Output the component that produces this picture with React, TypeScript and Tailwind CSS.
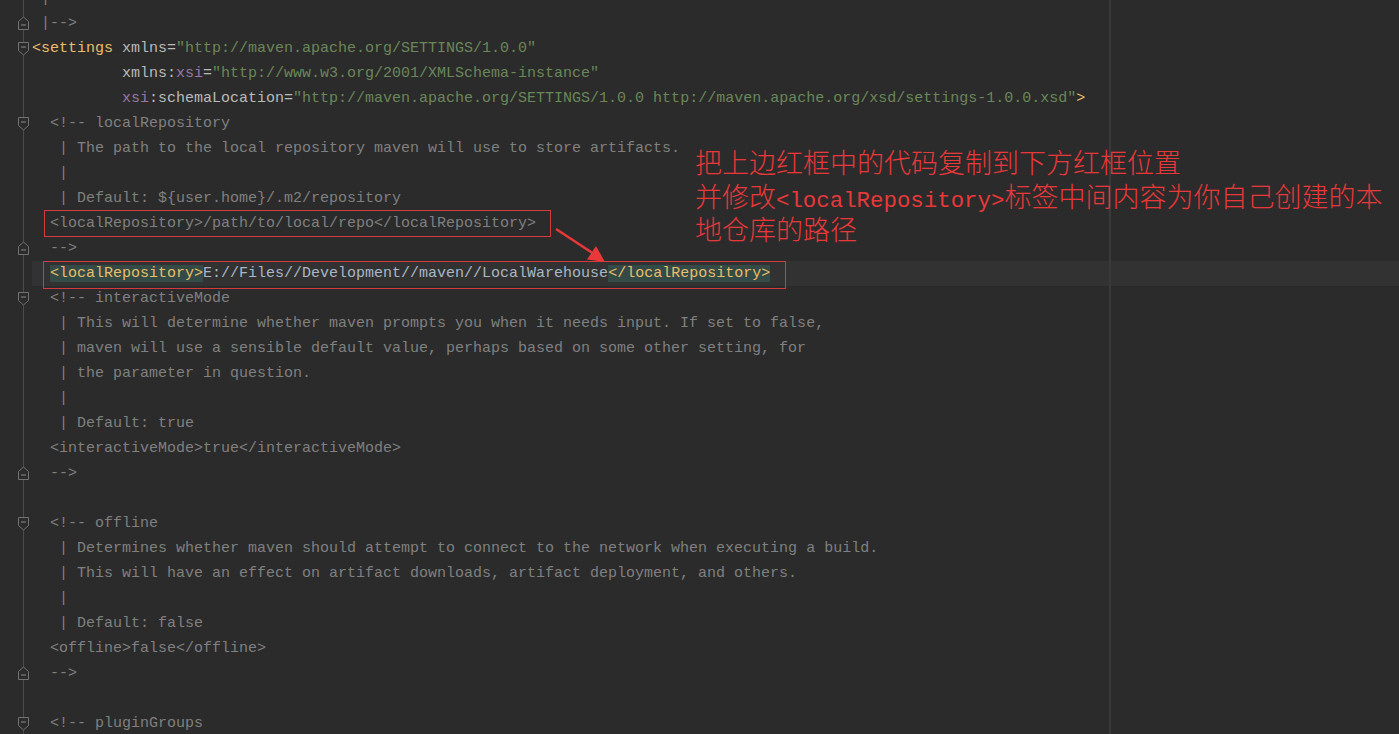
import React from "react";

type Seg = [string, string];

const C = "text-[#808080]";
const TAG = "text-[#e8bf6a]";
const ATTR = "text-[#bababa]";
const VAL = "text-[#6a8759]";
const NS = "text-[#9876aa]";
const TXT = "text-[#a9b7c6]";
const HL = "text-[#e8bf6a] bg-[#344a46]";

const c = (s: string): Seg[] => [[s, C]];

const lines: Seg[][] = [
  c(" |"),
  c(" |-->"),
  [
    ["<settings", TAG],
    [" xmlns=", ATTR],
    ['"http://maven.apache.org/SETTINGS/1.0.0"', VAL],
  ],
  [
    ["          xmlns:", ATTR],
    ["xsi", NS],
    ["=", ATTR],
    ['"http://www.w3.org/2001/XMLSchema-instance"', VAL],
  ],
  [
    ["          ", ATTR],
    ["xsi", NS],
    [":schemaLocation=", ATTR],
    ['"http://maven.apache.org/SETTINGS/1.0.0 http://maven.apache.org/xsd/settings-1.0.0.xsd"', VAL],
    [">", TAG],
  ],
  c("  <!-- localRepository"),
  c("   | The path to the local repository maven will use to store artifacts."),
  c("   |"),
  c("   | Default: ${user.home}/.m2/repository"),
  c("  <localRepository>/path/to/local/repo</localRepository>"),
  c("  -->"),
  [
    ["  ", TXT],
    ["<localRepository>", HL],
    ["E://Files//Development//maven//LocalWarehouse", TXT],
    ["</localRepository>", HL],
  ],
  c("  <!-- interactiveMode"),
  c("   | This will determine whether maven prompts you when it needs input. If set to false,"),
  c("   | maven will use a sensible default value, perhaps based on some other setting, for"),
  c("   | the parameter in question."),
  c("   |"),
  c("   | Default: true"),
  c("  <interactiveMode>true</interactiveMode>"),
  c("  -->"),
  [],
  c("  <!-- offline"),
  c("   | Determines whether maven should attempt to connect to the network when executing a build."),
  c("   | This will have an effect on artifact downloads, artifact deployment, and others."),
  c("   |"),
  c("   | Default: false"),
  c("  <offline>false</offline>"),
  c("  -->"),
  [],
  c("  <!-- pluginGroups"),
];

// fold markers keyed by line index (lines[0] is the clipped top row)
const folds: Record<number, "open" | "close"> = {
  1: "close",
  2: "open",
  5: "open",
  10: "close",
  12: "open",
  19: "close",
  21: "open",
  27: "close",
  29: "open",
};

const CARET_ROW = 11;

const GutterCell = ({ kind }: { kind?: "open" | "close" }) => (
  <svg width="32" height="25" viewBox="0 0 32 25" className="block">
    <line x1="23.5" y1="0" x2="23.5" y2="25" stroke="#4b4b4b" strokeWidth="1" />
    {kind === "open" && (
      <g>
        <path d="M18.5 6.5 H28.5 V14.5 L23.5 19 L18.5 14.5 Z" fill="#2b2b2b" stroke="#727272" />
        <line x1="21" y1="11" x2="26" y2="11" stroke="#8a8a8a" />
      </g>
    )}
    {kind === "close" && (
      <g>
        <path d="M23.5 6 L28.5 10.5 V18.5 H18.5 V10.5 Z" fill="#2b2b2b" stroke="#727272" />
        <line x1="21" y1="14" x2="26" y2="14" stroke="#8a8a8a" />
      </g>
    )}
  </svg>
);

const Arrow = () => (
  <svg width="70" height="50" viewBox="0 0 70 50" className="absolute left-[550px] top-[222px]">
    <line x1="6" y1="7" x2="44" y2="32" stroke="#e8383a" strokeWidth="2.5" />
    <path d="M55 40 L37 37.5 L46 24 Z" fill="#e8383a" />
  </svg>
);

export default function App() {
  return (
    <div className="relative w-[1399px] h-[734px] overflow-hidden bg-[#2b2b2b] font-['Liberation_Mono',monospace] text-[15px]">
      <div className="flex -mt-[14px]">
        <div className="w-[32px] shrink-0 flex flex-col">
          {lines.map((_, i) => (
            <GutterCell key={i} kind={folds[i]} />
          ))}
        </div>

        <div className="flex-1 flex flex-col">
          {lines.map((segs, i) => (
            <div
              key={i}
              className={`h-[25px] leading-[25px] whitespace-pre ${i === CARET_ROW ? "bg-[#323232]" : ""}`}
            >
              {segs.map(([t, cls], j) => (
                <span key={j} className={cls}>
                  {t}
                </span>
              ))}
            </div>
          ))}
        </div>
      </div>

      {/* right margin guide */}
      <div className="absolute left-[1109px] top-0 h-full w-[2px] bg-[#3a3a3a]" />

      {/* red annotation boxes */}
      <div className="absolute left-[44px] top-[210px] w-[507px] h-[27px] border border-[#d33b3e]" />
      <div className="absolute left-[43px] top-[261px] w-[743px] h-[28px] border border-[#d33b3e]" />
      <Arrow />

      <div className="absolute left-[695px] top-[145px] flex flex-col text-[27px] leading-[34px] text-[#e8383a] font-['Noto_Sans_CJK_SC',sans-serif] font-light">
        <p>把上边红框中的代码复制到下方红框位置</p>
        <p className="h-[33px]">
          并修改
          <span className="font-['Liberation_Mono',monospace] text-[22.4px] leading-none font-normal">
            &lt;localRepository&gt;
          </span>
          标签中间内容为你自己创建的本
        </p>
        <p>地仓库的路径</p>
      </div>
    </div>
  );
}
